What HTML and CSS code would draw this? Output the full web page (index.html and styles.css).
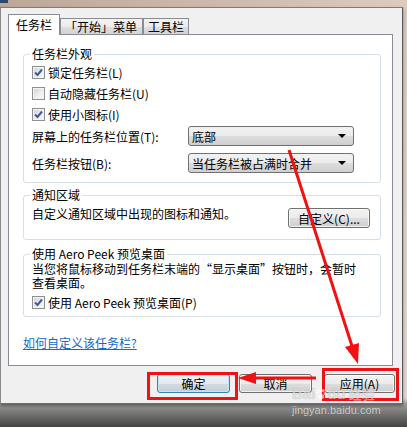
FILE: index.html
```html
<!DOCTYPE html>
<html lang="zh-CN">
<head>
    <meta charset="UTF-8">
    <meta name="viewport" content="width=device-width, initial-scale=1.0">
    <title>任务栏和「开始」菜单属性</title>
    <link rel="stylesheet" href="styles.css">
</head>
<body>

    <div class="wallpaper-top"><span class="app-icon"></span></div>

    <div class="dialog">
        <!-- Tabs -->
        <div class="tabs">
            <div class="tab active">任务栏</div>
            <div class="tab tab-wide">「开始」菜单</div>
            <div class="tab">工具栏</div>
        </div>

        <div class="tab-panel">
            <!-- Taskbar appearance -->
            <fieldset class="group group-look">
                <legend>任务栏外观</legend>
                <label class="check-row">
                    <span class="checkbox"><svg width="9" height="9" viewBox="0 0 9 9"><path d="M1 4.5 L3.5 7 L8 1.5" fill="none" stroke="#3d5c9e" stroke-width="2"/></svg></span>
                    锁定任务栏(L)
                </label>
                <label class="check-row">
                    <span class="checkbox"></span>
                    自动隐藏任务栏(U)
                </label>
                <label class="check-row">
                    <span class="checkbox"><svg width="9" height="9" viewBox="0 0 9 9"><path d="M1 4.5 L3.5 7 L8 1.5" fill="none" stroke="#3d5c9e" stroke-width="2"/></svg></span>
                    使用小图标(I)
                </label>
                <div class="field-row">
                    <span class="field-label">屏幕上的任务栏位置(T):</span>
                    <div class="combo"><span>底部</span><span class="combo-arrow"></span></div>
                </div>
                <div class="field-row">
                    <span class="field-label">任务栏按钮(B):</span>
                    <div class="combo"><span>当任务栏被占满时合并</span><span class="combo-arrow"></span></div>
                </div>
            </fieldset>

            <!-- Notification area -->
            <fieldset class="group group-notify">
                <legend>通知区域</legend>
                <div class="notify-row">
                    <p class="group-text">自定义通知区域中出现的图标和通知。</p>
                    <button class="win-button custom-button">自定义(C)...</button>
                </div>
            </fieldset>

            <!-- Aero Peek -->
            <fieldset class="group group-peek">
                <legend>使用 Aero Peek 预览桌面</legend>
                <p class="group-text">当您将鼠标移动到任务栏末端的“显示桌面”按钮时，会暂时</p>
                <p class="group-text">查看桌面。</p>
                <label class="check-row peek-row">
                    <span class="checkbox"><svg width="9" height="9" viewBox="0 0 9 9"><path d="M1 4.5 L3.5 7 L8 1.5" fill="none" stroke="#3d5c9e" stroke-width="2"/></svg></span>
                    使用 Aero Peek 预览桌面(P)
                </label>
            </fieldset>

            <a class="help-link" href="#">如何自定义该任务栏?</a>
        </div>

        <!-- Dialog buttons -->
        <div class="dialog-buttons">
            <button class="win-button default-button">确定</button>
            <button class="win-button">取消</button>
            <button class="win-button apply-button">应用(A)</button>
        </div>
    </div>

    <!-- Red marks drawn over the screenshot -->
    <svg class="annotations" width="407" height="427" viewBox="0 0 407 427">
        <rect x="148.5" y="373.5" width="88" height="25" fill="none" stroke="#f01212" stroke-width="3"/>
        <rect x="323.5" y="369.5" width="74" height="30" fill="none" stroke="#f01212" stroke-width="3"/>
        <line x1="316" y1="378" x2="252" y2="378" stroke="#f01212" stroke-width="3"/>
        <polygon points="238,378 256,372 256,384" fill="#f01212"/>
        <line x1="289" y1="150" x2="352" y2="346" stroke="#f01212" stroke-width="3"/>
        <polygon points="358,364 345,347 359,343" fill="#f01212"/>
    </svg>

    <div class="watermark">
        <span class="watermark-logo">Bai<svg width="12" height="12" viewBox="0 0 14 14"><circle cx="3" cy="5" r="1.8"/><circle cx="6" cy="2.5" r="1.8"/><circle cx="9.5" cy="3" r="1.8"/><circle cx="11.5" cy="6.5" r="1.6"/><ellipse cx="7" cy="10" rx="3.8" ry="3"/></svg>du</span><span class="watermark-cn">经验</span>
        <div class="watermark-url">jingyan.baidu.com</div>
    </div>

</body>
</html>
```

FILE: styles.css
```css
* {
    box-sizing: border-box;
}
body {
    margin: 0;
    width: 407px;
    height: 427px;
    overflow: hidden;
    position: relative;
    font-family: "Noto Sans CJK SC", "Noto Sans", sans-serif;
    font-size: 12px;
    color: #000;
    /* wallpaper beside the dialog, photo below it */
    background: linear-gradient(to bottom, #d9c8bc 0, #e2d8d0 398px, #9d9d9b 404px, #7a7a78 412px, #444442 427px);
}
.wallpaper-top {
    height: 7px;
    background: linear-gradient(to right, #bda797, #cbb6a8 45%, #dccbbf);
}
.app-icon {
    display: block;
    width: 8px;
    height: 3px;
    background: #2c4a6e;
}
.dialog {
    width: 403px;
    height: 397px;
    background: #f0f0f0;
    border-top: 1px solid #7d7d7d;
    border-left: 1px solid #8a8a8a;
    border-right: 1px solid #595959;
    border-bottom: 1px solid #6c6c6c;
    padding: 6px 7px 0 7px;
    box-shadow: 0 2px 3px rgba(0, 0, 0, 0.4);
}

/* Tabs */
.tabs {
    display: flex;
    align-items: flex-end;
    height: 20px;
}
.tab {
    height: 16px;
    padding: 0 4px;
    border: 1px solid #898c95;
    border-bottom: none;
    background: linear-gradient(#f3f3f3, #ebebeb 50%, #dedede 51%, #d4d4d4);
    line-height: 15px;
    white-space: nowrap;
}
.tab-wide {
    padding-right: 5px;
}
.tab.active {
    height: 21px;
    margin-bottom: -1px;
    padding: 0 7px;
    background: #fff;
    line-height: 20px;
    position: relative;
    z-index: 1;
}
.tab-panel {
    width: 385px;
    height: 332px;
    background: #fff;
    border: 1px solid #898c95;
    padding: 12px 11px 0 14px;
}

/* Group boxes */
.group {
    margin: 0;
    min-width: 0;
    border: 1px solid #d5dfe5;
    border-radius: 3px;
    padding: 1px 10px 9px 8px;
}
.group legend {
    padding: 0 2px;
    margin-left: -2px;
    line-height: 14px;
}
.group-notify {
    margin-top: 5px;
    padding-bottom: 11px;
}
.group-peek {
    margin-top: 7px;
    padding-bottom: 4px;
}
.group-text {
    margin: 0;
    line-height: 14px;
    height: 14px;
    white-space: nowrap;
}
.check-row {
    display: flex;
    align-items: center;
    gap: 3px;
    height: 21px;
}
.peek-row {
    height: 19px;
    margin-top: 3px;
}
.checkbox {
    width: 13px;
    height: 13px;
    border: 1px solid #8e8f8f;
    background: linear-gradient(135deg, #cdd1d6, #eef0f2 60%, #f8f8f8);
    box-shadow: inset 0 0 0 1px #f4f4f4;
    display: flex;
    align-items: center;
    justify-content: center;
}
.field-row {
    display: flex;
    align-items: center;
    height: 20px;
    margin-top: 1px;
}
.field-row + .field-row {
    margin-top: 7px;
}
.field-label {
    width: 156px;
}
.combo {
    width: 166px;
    height: 20px;
    border: 1px solid #707070;
    border-radius: 3px;
    background: linear-gradient(#f2f2f2, #ebebeb 50%, #dddddd 51%, #cfcfcf);
    display: flex;
    align-items: center;
    justify-content: space-between;
    padding: 0 7px 0 3px;
}
.combo-arrow {
    width: 0;
    height: 0;
    border-left: 4px solid transparent;
    border-right: 4px solid transparent;
    border-top: 4px solid #000;
}
.notify-row {
    display: flex;
    justify-content: space-between;
    align-items: flex-start;
}
.notify-row .group-text {
    margin-top: 4px;
}
.help-link {
    display: block;
    margin-top: 19px;
    line-height: 14px;
    color: #1569c7;
    text-decoration: underline;
}

/* Buttons */
.win-button {
    height: 20px;
    padding: 0;
    font-family: inherit;
    font-size: 12px;
    color: #000;
    border: 1px solid #707070;
    border-radius: 3px;
    background: linear-gradient(#f2f2f2, #ebebeb 50%, #dddddd 51%, #cfcfcf);
    box-shadow: inset 0 0 0 1px rgba(255, 255, 255, 0.7);
}
.custom-button {
    width: 82px;
    margin-top: 5px;
}
.dialog-buttons {
    display: flex;
    justify-content: flex-end;
    gap: 9px;
    margin-top: 8px;
    padding-right: 0;
}
.dialog-buttons .win-button {
    width: 73px;
    height: 19px;
}
.dialog-buttons .apply-button {
    width: 71px;
    margin-left: 3px;
}
.default-button {
    border-color: #3c7fb1;
    box-shadow: inset 0 0 0 1px #c4e5f6;
    background: linear-gradient(#eef3f6, #e3e9ed 50%, #d2dbe1 51%, #c4ced5);
}

/* Overlays */
.annotations {
    position: absolute;
    top: 0;
    left: 0;
    pointer-events: none;
}
.watermark {
    position: absolute;
    left: 292px;
    top: 386px;
    color: rgba(255, 255, 255, 0.6);
    text-shadow: 0 0 1px rgba(0, 0, 0, 0.3);
    pointer-events: none;
    line-height: 15px;
}
.watermark-logo {
    font-family: "Liberation Sans", sans-serif;
    font-weight: bold;
    font-size: 15px;
}
.watermark-logo svg {
    fill: rgba(255, 255, 255, 0.6);
    vertical-align: -1px;
}
.watermark-cn {
    font-size: 13px;
    font-weight: bold;
    margin-left: 3px;
}
.watermark-url {
    font-family: "Liberation Sans", sans-serif;
    font-size: 11px;
    line-height: 12px;
    margin-top: 3px;
    color: rgba(255, 255, 255, 0.7);
}
```
